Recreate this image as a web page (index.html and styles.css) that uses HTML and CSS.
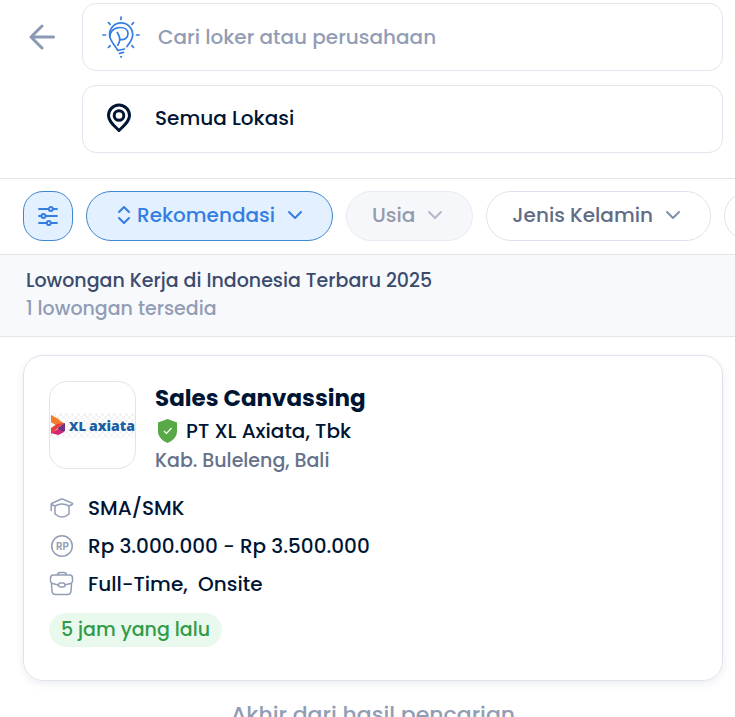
FILE: index.html
```html
<!DOCTYPE html>
<html lang="id">
<head>
<meta charset="utf-8">
<meta name="viewport" content="width=device-width, initial-scale=1">
<title>Lowongan Kerja</title>
<link rel="stylesheet" href="styles.css">
</head>
<body>
<header class="search">
  <button class="back" type="button" aria-label="Kembali">
    <svg width="26" height="26" viewBox="0 0 26 26" fill="none" stroke="currentColor" stroke-width="3" stroke-linecap="round" stroke-linejoin="round"><path d="M13 2 2 13l11 11M2 13h22.500"/></svg>
  </button>
  <form class="fields">
    <label class="field">
      <svg class="bulb" width="38" height="42" viewBox="0 0 38 42" fill="none" stroke="currentColor" stroke-width="1.700" stroke-linecap="round" stroke-linejoin="round">
        <path d="M19 1v2.500M6.500 6.700l1.600 1.600M31.500 6.700l-1.600 1.600M1 19h2.500M34.500 19H37M6.500 31.300l1.600-1.600M31.500 31.300l-1.600-1.600"/>
        <path d="M25 30.500c2.200-3.400 5.700-6.500 5.700-12A11.600 11.600 0 0 0 7.500 18.500c0 6.500 5.200 10 8.300 16l6.700-1.500M17.500 37.400l4-1M18.800 40.800h.600"/>
        <path d="M7.800 21.500c-.300-5.500 4-10 10.200-10 5 0 8 2.500 8 6.200 0 4.200-3.500 6.500-7.800 5.800M15.300 16.500c1.500 2.500 2.700 5 2.500 7.500-.200 2.200-1.500 3.500-2 5.200"/>
      </svg>
      <input type="search" placeholder="Cari loker atau perusahaan" aria-label="Cari loker atau perusahaan">
    </label>
    <button class="field place" type="button">
      <svg class="pin" width="26" height="30" viewBox="0 0 26 30" fill="none" stroke="currentColor" stroke-width="3" stroke-linejoin="round"><path d="M13 27.500C8 22.500 2.500 18.500 2.500 12.500a10.500 10.500 0 0 1 21 0c0 6-5.500 10-10.500 15Z"/><circle cx="13" cy="12.500" r="4.800"/></svg>
      <span>Semua Lokasi</span>
    </button>
  </form>
</header>

<nav class="filters" aria-label="Filter">
  <button class="chip active icon-only" type="button" aria-label="Semua filter">
    <svg width="20" height="20" viewBox="0 0 20 20" fill="none" stroke="currentColor" stroke-width="1.900" stroke-linecap="round"><path d="M1 3h9.500M15 3h4M1 10h2.500M8 10h11M1 17h7.500M13 17h6"/><circle cx="12.800" cy="3" r="2"/><circle cx="5.500" cy="10" r="2"/><circle cx="10.800" cy="17" r="2"/></svg>
  </button>
  <button class="chip active sort" type="button">
    <svg width="14" height="20" viewBox="0 0 14 20" fill="none" stroke="currentColor" stroke-width="2" stroke-linecap="round" stroke-linejoin="round"><path d="m2 7 5-5 5 5M2 13l5 5 5-5"/></svg>
    <span>Rekomendasi</span>
    <svg class="chevron" viewBox="0 0 16 10"><path d="m2 2 6 6 6-6"/></svg>
  </button>
  <button class="chip off" type="button" disabled><span>Usia</span><svg class="chevron" viewBox="0 0 16 10"><path d="m2 2 6 6 6-6"/></svg></button>
  <button class="chip" type="button"><span>Jenis Kelamin</span><svg class="chevron" viewBox="0 0 16 10"><path d="m2 2 6 6 6-6"/></svg></button>
  <button class="chip" type="button" aria-label="Filter lainnya"><svg class="chevron" viewBox="0 0 16 10"><path d="m2 2 6 6 6-6"/></svg></button>
</nav>

<section class="summary">
  <h1>Lowongan Kerja di Indonesia Terbaru 2025</h1>
  <p>1 lowongan tersedia</p>
</section>

<main>
  <article class="card">
    <div class="company">
      <div class="logo">
        <svg viewBox="0 0 85 25" role="img" aria-label="XL axiata">
          <path fill="#f9a72f" d="M1 2l8 4 1 6-9-3z"/><path fill="#f47b30" d="m1 2 14 9-8 2-6-4z"/><path fill="#e8403b" d="m1 15 6-4 8-1-7 5-7 6z"/><path fill="#6b3285" d="M8 15l7-5v8l-7 4z"/><path fill="#d62872" d="m1 20 7-4 6 3-6 3z"/>
          <text class="xl" x="19" y="18">XL</text><text class="axiata" x="39" y="18">axiata</text>
        </svg>
      </div>
      <div class="heading">
        <h2>Sales Canvassing</h2>
        <p class="name"><svg width="21" height="24" viewBox="0 0 21 24"><path fill="#58a846" d="M10.500 0 20 3.500V12c0 6-4 9.500-9.500 12C5 21.500 1 18 1 12V3.500z"/><path d="m7 12 2.500 2.500L14.500 9" fill="none" stroke="#fff" stroke-width="1.200"/></svg>PT XL Axiata, Tbk</p>
        <p class="area">Kab. Buleleng, Bali</p>
      </div>
    </div>
    <ul class="facts">
      <li><svg width="26" height="26" viewBox="0 0 26 26"><path d="M12 4.300q1-.400 2 0l9 3.800q1.300.700 0 1.400L20 11q-7-4-14 0L3 9.800q-1.500-.800 0-1.500zM2.200 9.500v6M6 11v8q7 6 14 0v-8"/></svg>SMA/SMK</li>
      <li><svg width="26" height="26" viewBox="0 0 26 26"><circle cx="13" cy="13" r="10.300"/><text x="7" y="17">RP</text></svg>Rp 3.000.000 - Rp 3.500.000</li>
      <li><svg width="26" height="26" viewBox="0 0 26 26"><path d="M8.500 4q0-2.500 3-2.500h3q3 0 3 2.500M4.500 4h16q3 0 3 3v3q0 2-2 2.500l-6 1.500h-6l-6-1.500Q1.500 12 1.500 10V7q0-3 3-3zM2.500 13l.5 7.500q.3 3 3.500 3h12q3.200 0 3.500-3l.5-7.500"/><rect x="9.500" y="12" width="6.500" height="4" rx="2" fill="#fff"/></svg>Full-Time,&nbsp; Onsite</li>
    </ul>
    <span class="posted">5 jam yang lalu</span>
  </article>
  <p class="end">Akhir dari hasil pencarian</p>
</main>
</body>
</html>
```
FILE: styles.css
```css
* { box-sizing: border-box; }
body, h1, h2, p, ul { margin: 0; padding: 0; }
html { scrollbar-width: none; }
body {
  background: #fff;
  color: #001533;
  font: 500 20px/30px Poppins, Inter, sans-serif;
}
button, input { font: inherit; color: inherit; }
svg { flex: none; display: block; }

.search {
  display: flex;
  align-items: flex-start;
  padding: 3px 12px 25px 23px;
  border-bottom: 1px solid #e4e5e9;
}
.back {
  display: flex;
  align-items: center;
  width: 59px;
  height: 68px;
  flex: none;
  padding: 0 6px;
  border: 0;
  background: none;
  color: #8c99b3;
}
.fields { flex: 1; display: grid; gap: 14px; }
.field {
  display: flex;
  align-items: center;
  height: 68px;
  min-width: 0;
  padding: 0 19px;
  border: 1px solid #e3e5ef;
  border-radius: 14px;
  background: #fff;
  text-align: left;
}
.field input {
  flex: 1;
  min-width: 0;
  margin-left: 18px;
  padding: 0;
  border: 0;
  outline: 0;
  background: none;
}
.field input::placeholder { color: #929db5; opacity: 1; }
.bulb { color: #347ee2; }
.place { padding: 0 23px 2px; gap: 23px; }

.filters {
  display: flex;
  gap: 13px;
  padding: 12px 0 13px 23px;
  overflow-x: auto;
  scrollbar-width: none;
  border-bottom: 1px solid #e4e5e9;
}
.chip {
  display: flex;
  align-items: center;
  gap: 12px;
  flex: none;
  height: 50px;
  padding: 0 29px 2px 25px;
  border: 1px solid #dee2ec;
  border-radius: 25px;
  background: #fff;
  color: #5f6c86;
}
.chevron {
  width: 16px;
  height: 10px;
  fill: none;
  stroke: #8290aa;
  stroke-width: 2;
  stroke-linecap: round;
  stroke-linejoin: round;
}
.active { background: #e3f0ff; border-color: #3f86d4; color: #347ee2; }
.active .chevron { stroke: #347ee2; }
.icon-only { width: 50px; padding: 0; justify-content: center; border-radius: 20px; }
.sort { padding-left: 30px; gap: 6px; }
.sort .chevron { margin-left: 6px; }
.off { background: #f5f7fb; border-color: #e8ebf3; color: #939bac; }
.off .chevron { stroke: #b1bac9; }

.summary {
  padding: 12px 26px 13px;
  border-bottom: 1px solid #e4e5e9;
  background: #f7f9fd;
  line-height: 28px;
  font-size: 19px;
}
.summary h1 { font: inherit; color: #3c4b6b; }
.summary p { color: #929db5; }

main { padding: 18px 12px 24px 23px; }
.card {
  padding: 25px 25px 33px;
  border: 1px solid #dfe2ed;
  border-radius: 20px;
  box-shadow: 0 3px 8px #0a256014;
}
.company { display: flex; gap: 19px; }
.logo {
  display: flex;
  align-items: center;
  width: 87px;
  height: 88px;
  flex: none;
  border: 1px solid #e1e4ec;
  border-radius: 18px;
}
.logo svg {
  width: 100%;
  background: repeating-conic-gradient(#f4f4f4 0 25%, #fff 0 50%) 0 0 / 6px 6px;
}
.logo text { fill: #1c5fa6; font: 800 14px "Open Sans", "Noto Sans", sans-serif; }
.logo .xl { font-size: 13px; }
.heading { min-width: 0; }
h2 { font-size: 23px; line-height: 34px; font-weight: 700; }
.name { display: flex; align-items: center; gap: 8px; padding-left: 2px; line-height: 32px; }
.area { color: #65718a; font-size: 19px; line-height: 27px; }
.facts {
  display: grid;
  gap: 8px;
  margin-top: 19px;
  list-style: none;
}
.facts li { display: flex; align-items: center; gap: 13px; line-height: 30px; }
.facts svg { fill: none; stroke: #929db5; stroke-width: 1.500; stroke-linecap: round; stroke-linejoin: round; }
.facts text { fill: #929db5; stroke: none; font: 700 10px Roboto, sans-serif; }
.posted {
  display: inline-block;
  margin-top: 14px;
  padding: 0 12px;
  border-radius: 17px;
  background: #eaf9ee;
  color: #309b49;
  font-size: 19px;
  line-height: 34px;
}
.end { margin-top: 19px; text-align: center; color: #929db5; font-size: 22px; }
```
